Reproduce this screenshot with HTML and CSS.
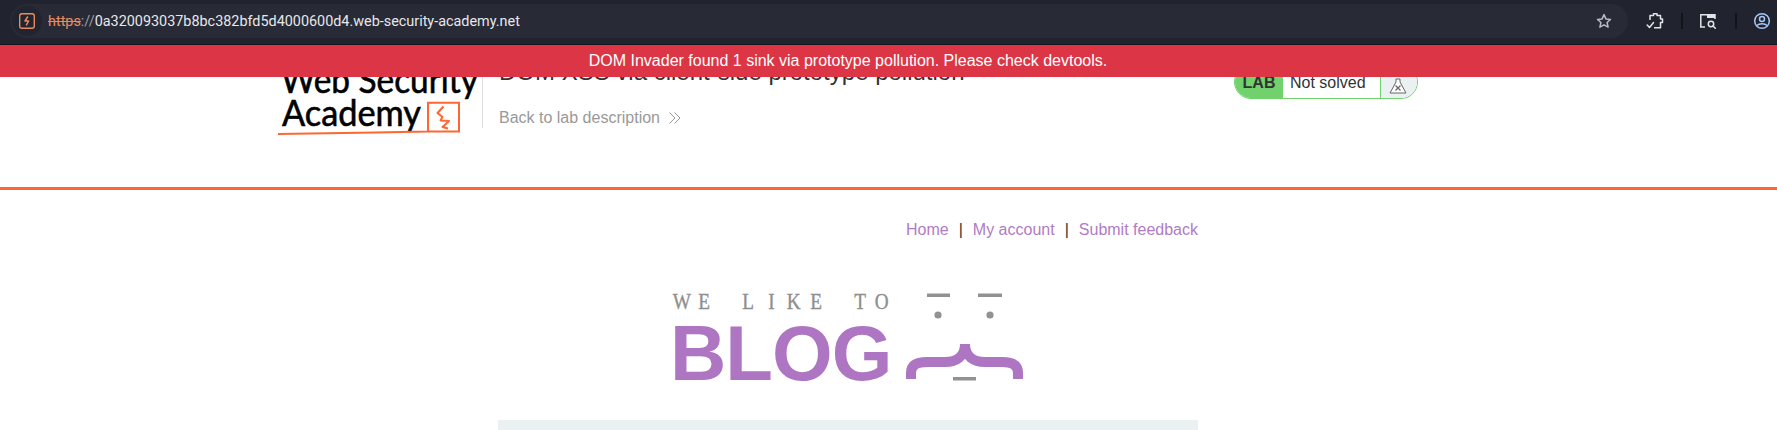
FILE: index.html
```html
<!DOCTYPE html>
<html lang="en">
<head>
<meta charset="utf-8">
<title>DOM XSS via client-side prototype pollution</title>
<link rel="stylesheet" href="styles.css">
</head>
<body>
<div class="toolbar">
  <div class="omnibox">
    <span class="chip">
      <svg class="chip-icon" width="18" height="18" viewBox="0 0 18 18" fill="none" stroke="#e98b5e" stroke-width="1.4"><rect x="1.7" y="1.7" width="14.6" height="14.6" rx="2.2"/><path d="M9.8 4.5 7 9h3.6l-2.4 4.4" stroke-width="1.5" stroke-linejoin="round"/></svg>
    </span>
    <span class="url"><span class="scheme">https</span><span class="sep">://</span>0a320093037b8bc382bfd5d4000600d4.web-security-academy.net</span>
    <svg class="star" width="18" height="18" viewBox="0 0 18 18" fill="none" stroke="#b9bbc2" stroke-width="1.5" stroke-linejoin="round"><path d="M9 2.6l1.9 4.3 4.6.5-3.4 3.1 1 4.6L9 12.8l-4.1 2.3 1-4.6L2.500 7.400l4.600-.5z"/></svg>
  </div>
  <div class="actions">
    <svg class="ext" width="18" height="18" viewBox="0 0 18 18" fill="none" stroke="#e3e4e8" stroke-width="1.5" stroke-linejoin="round"><path d="M4 8V3.500H7.500V1.800H11V3.500H14.500V7H16.500V10.500H14.500V15.800H8"/><path d="M1.200 13l2.300 2.400 4-4.800" stroke-linecap="round"/></svg>
    <span class="bar"></span>
    <svg class="lens" width="18" height="18" viewBox="0 0 18 18" fill="none" stroke="#e3e4e8" stroke-width="1.5"><path d="M6 15H1.800V2.800H16V7"/><path d="M8 2.800h8V6H8z" fill="#e3e4e8" stroke="none"/><circle cx="12" cy="12" r="2.700"/><path d="M14 14l2.300 2.300" stroke-linecap="round"/></svg>
    <span class="bar"></span>
    <svg class="avatar" width="18" height="18" viewBox="0 0 18 18" fill="none" stroke="#a6c6f5" stroke-width="1.500"><circle cx="9" cy="9" r="7.300"/><circle cx="9" cy="7" r="2.500"/><path d="M3.800 13.500c2.500-2.300 7.900-2.300 10.400 0"/></svg>
  </div>
</div>
<div class="viewport">
  <div class="banner">DOM Invader found 1 sink via prototype pollution. Please check devtools.</div>
  <header class="lab-header">
    <div class="lab-inner">
      <svg class="wsa-logo" width="204" height="96" viewBox="0 0 204 96">
        <text class="wsa-text" x="3" y="48" textLength="197" lengthAdjust="spacingAndGlyphs">Web Security</text>
        <text class="wsa-text" x="4" y="81" textLength="139" lengthAdjust="spacingAndGlyphs">Academy</text>
        <path d="M0 89c40-.5 100-1.500 150-2.500V57.800h31V86.500h-31" fill="none" stroke="#ff6633" stroke-width="2"/>
        <path d="M165.500 61.500 159.500 68l5 4-2 3.500 8.500.5-6.500 6 5.500 1.500" fill="none" stroke="#ff6633" stroke-width="2" stroke-linejoin="round"/>
      </svg>
      <div class="lab-title">
        <h2>DOM XSS via client-side prototype pollution</h2>
        <a class="back" href="#">Back to lab description
          <svg width="14" height="14" viewBox="0 0 14 14" fill="none" stroke="#999" stroke-width="1"><path d="M1.500 1.500 7 7l-5.500 5.500M6.500 1.500 12 7l-5.500 5.500"/></svg>
        </a>
      </div>
      <div class="status">
        <span class="status-tag">LAB</span>
        <span class="status-text">Not solved</span>
        <span class="status-icon">
          <svg width="18" height="16" viewBox="0 0 18 16" fill="#fff" stroke="#666" stroke-width="1"><path d="M7 1h4v3l6 11H1L7 4z"/><path d="M6.500 7.500l5 5M11.500 7.500l-5 5" fill="none" stroke-width="1.200"/></svg>
        </span>
      </div>
    </div>
  </header>
  <main class="page">
    <nav class="site-nav">
      <a href="#">Home</a><span class="pipe">|</span><a href="#">My account</a><span class="pipe">|</span><a href="#">Submit feedback</a>
    </nav>
    <svg class="blog-logo" width="360" height="110" viewBox="0 0 360 110">
      <g transform="scale(.8 1)">
        <text class="we-like" x="11 39 0 94 123 151 179 0 234 261" y="26">WE LIKE TO</text>
      </g>
      <text class="blog" x="-3" y="97">BLOG</text>
      <path class="face" d="M254 10.500h23v3.500h-23zM305 10.500h24v3.500h-24zM280 94h23v3.500h-23z"/>
      <circle class="face" cx="265" cy="32" r="3.600"/>
      <circle class="face" cx="317" cy="32" r="3.600"/>
      <path class="brace" d="M238 96V90C238 82 244 79 254 79H272C283 79 292 74 292 61C292 74 301 79 312 79H329C339 79 345 82 345 90V96"/>
    </svg>
    <div class="blog-list"></div>
  </main>
</div>
</body>
</html>
```
FILE: styles.css
```css
* { box-sizing: border-box; }
html, body { margin: 0; padding: 0; background: #fff; height: 430px; overflow: hidden; }
body { font-family: "Liberation Sans", Arial, sans-serif; font-size: 16px; color: #333; }

.toolbar {
  height: 45px;
  background: #21242e;
  border-bottom: 1px solid #14161c;
  display: flex;
  align-items: center;
  padding: 0 0 2px 10px;
}
.omnibox {
  width: 1618px;
  height: 34px;
  background: #282a36;
  border-radius: 17px;
  display: flex;
  align-items: center;
  padding-right: 15px;
}
.chip {
  width: 30px;
  height: 30px;
  margin-left: 2px;
  border-radius: 50%;
  background: #22252f;
  display: flex;
  align-items: center;
  justify-content: center;
  flex: none;
}
.url {
  font-family: Roboto, "Noto Sans", sans-serif;
  font-size: 14.4px;
  color: #e6e7ea;
  margin-left: 6px;
  flex: 1;
  white-space: nowrap;
}
.scheme { color: #e98b5e; text-decoration: line-through; }
.sep { color: #9b9da5; }
.actions {
  display: flex;
  align-items: center;
  flex: 1;
  padding-left: 18px;
}
.bar { width: 2px; height: 16px; background: #12141a; }
.ext { margin-right: 17px; }
.lens { margin: 0 18px 0 16px; }
.avatar { margin-left: 16px; }

.viewport { position: relative; height: 385px; overflow: hidden; }
.banner {
  position: absolute;
  top: 0;
  left: 0;
  right: 0;
  height: 32px;
  background: #dc3545;
  color: #fff;
  text-align: center;
  line-height: 31px;
  padding-right: 81px;
  z-index: 2;
}

.lab-header { height: 145px; border-bottom: 3px solid #ff6633; }
.lab-inner { display: flex; width: 1140px; margin-left: 278px; align-items: flex-start; }
.wsa-logo { flex: none; }
.wsa-text { font-family: Lato, "Open Sans", sans-serif; font-size: 36px; fill: #000; stroke: #000; stroke-width: .6px; }
.lab-title {
  height: 83px;
  border-left: 1px solid #e0e0e0;
  padding-left: 16px;
}
.lab-title h2 {
  margin: 0;
  font-size: 24px;
  font-weight: 400;
  line-height: 30px;
  padding-top: 12px;
  color: #333;
  white-space: nowrap;
}
.back {
  display: flex;
  align-items: center;
  gap: 8px;
  margin-top: 22px;
  color: #999;
  text-decoration: none;
  line-height: 18px;
}
.status {
  margin-left: auto;
  margin-top: 20px;
  width: 184px;
  height: 34px;
  border: 1px solid #70d16d;
  border-radius: 17px;
  overflow: hidden;
  display: flex;
  align-items: stretch;
  line-height: 33px;
}
.status-tag { width: 48px; background: #70d16d; font-weight: 700; text-align: center; }
.status-text { flex: 1; padding-left: 7px; }
.status-icon {
  width: 37px;
  background: #ebf0f2;
  border-left: 1px solid #70d16d;
  display: flex;
  align-items: center;
  justify-content: center;
  padding: 8px 3px 0 0;
}

.page { width: 700px; margin-left: 498px; }
.site-nav {
  display: flex;
  justify-content: flex-end;
  padding-top: 31px;
  line-height: 18px;
}
.site-nav a { color: #b07cc5; text-decoration: none; }
.pipe { margin: 0 10px; color: #333; }
.blog-logo { display: block; margin: 44px 0 0 175px; overflow: visible; }
.we-like {
  font-family: "Liberation Serif", serif;
  font-size: 24px;
  fill: #8f8f8f;
  stroke: #8f8f8f;
  stroke-width: .4px;
  text-anchor: middle;
}
.blog { font-family: "Liberation Sans", Arial, sans-serif; font-weight: 700; font-size: 78px; letter-spacing: -1px; fill: #ae75c2; }
.face { fill: #929292; }
.brace { fill: none; stroke: #ae75c2; stroke-width: 10; }
.blog-list { height: 60px; background: #ebf0f2; margin-top: 27px; }
```
